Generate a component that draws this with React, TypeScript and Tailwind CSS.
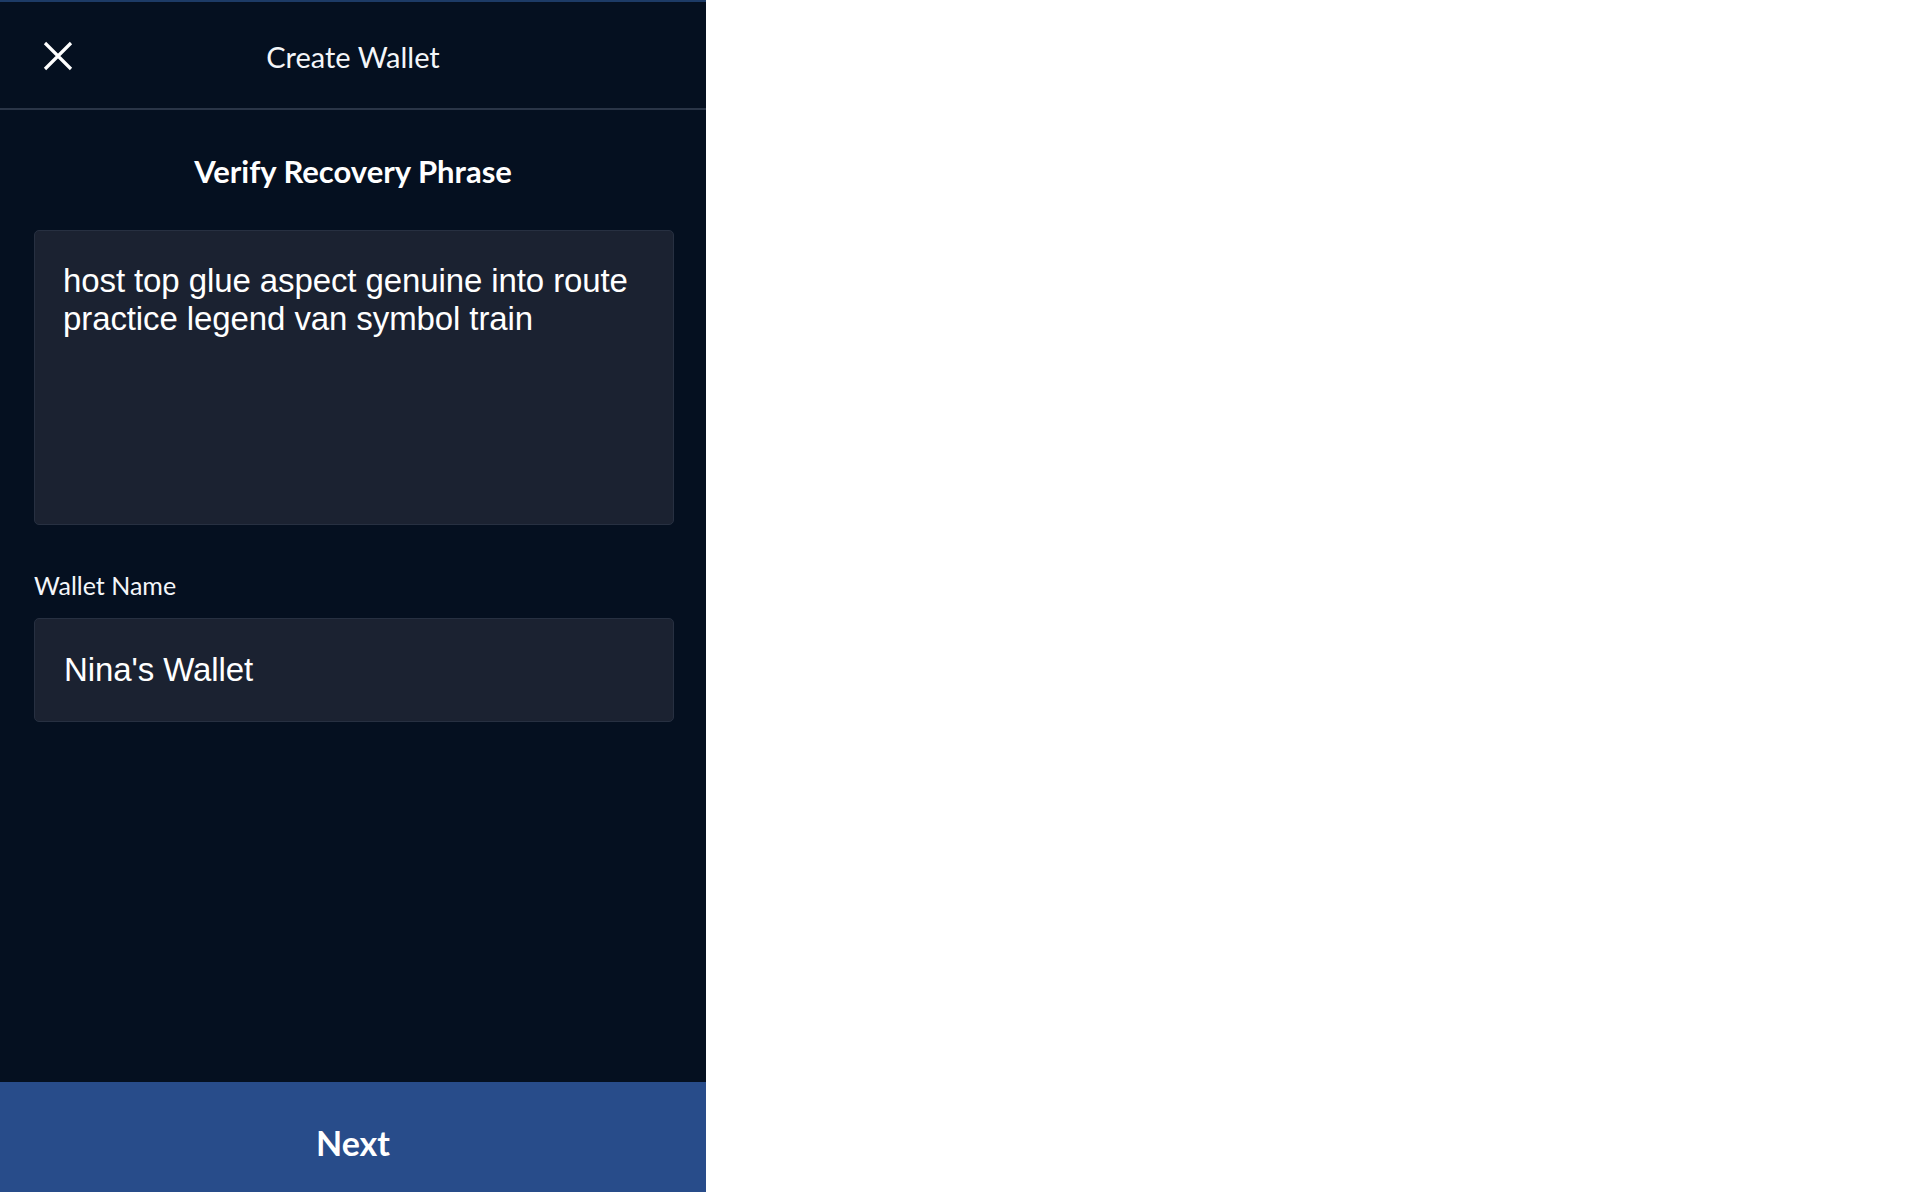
import { useState } from "react"

// Create wallet flow: verify recovery phrase step
const phrase = "host top glue aspect genuine into route practice legend van symbol train"

export default function App() {
  const [words, setWords] = useState<string>(phrase)
  const [walletName, setWalletName] = useState<string>("Nina's Wallet")

  return (
    <div className="flex min-h-[1192px] w-full bg-white">
      <div className="flex h-[1192px] w-[706px] flex-col border-t-2 border-[#1d3b66] bg-[#051020] font-['Lato',sans-serif] text-white">
        <header className="grid h-[108px] grid-cols-[1fr_auto_1fr] items-center border-b-2 border-[#2a3547]">
          <button className="ml-[43px] mt-[2px] flex h-[30px] w-[30px] items-center justify-center">
            <svg width="30" height="30" viewBox="0 0 30 30" fill="none">
              <path d="M2 2 L28 28 M28 2 L2 28" stroke="#ffffff" strokeWidth="3.2" />
            </svg>
          </button>
          <h1 className="pt-[2px] text-[29px] font-normal leading-none text-[#f4f6f9]">Create Wallet</h1>
          <div />
        </header>

        <div className="flex h-[120px] items-center justify-center pt-[2px]">
          <h2 className="text-[31px] font-bold leading-none">Verify Recovery Phrase</h2>
        </div>

        <div className="pl-[34px] pr-[32px]">
          <textarea
            value={words}
            onChange={(e) => setWords(e.target.value)}
            className="block h-[295px] w-full resize-none rounded-[5px] border border-[#273041] bg-[#1b2231] px-[28px] pt-[31px] font-['Liberation_Sans',Arial,sans-serif] text-[33px] leading-[38px] tracking-[-0.1px] text-white outline-none"
          />

          <label className="mt-[45px] block text-[25px] leading-[30px] text-[#f4f6f9]">Wallet Name</label>
          <input
            value={walletName}
            onChange={(e) => setWalletName(e.target.value)}
            className="mt-[18px] block h-[104px] w-full rounded-[5px] border border-[#273041] bg-[#1b2231] px-[29px] font-['Liberation_Sans',Arial,sans-serif] text-[33px] tracking-[-0.1px] text-white outline-none"
          />
        </div>

        <div className="flex-1" />

        <button className="flex h-[110px] w-full items-center justify-center bg-[#284c8a] pt-[10px] text-[34px] font-bold text-white">
          Next
        </button>
      </div>
    </div>
  )
}
